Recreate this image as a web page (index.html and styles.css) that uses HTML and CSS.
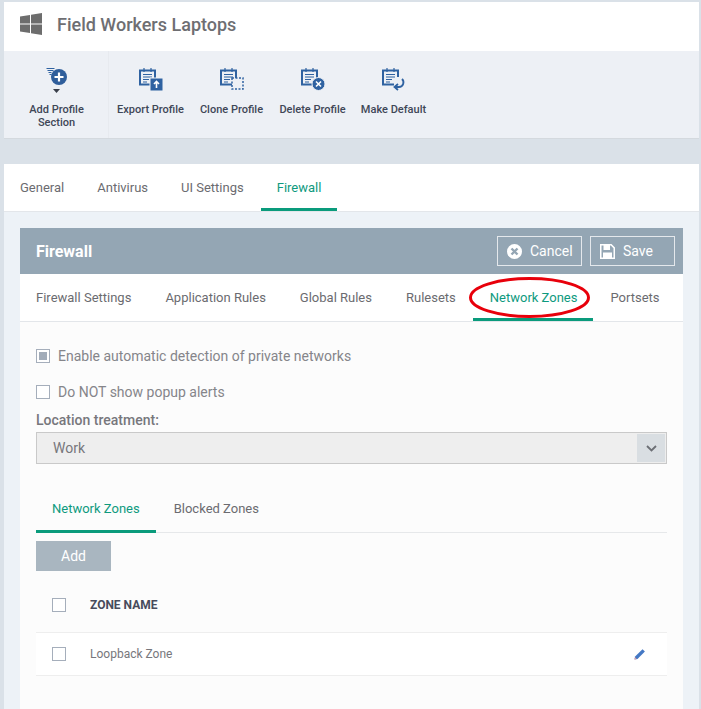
FILE: index.html
```html
<!DOCTYPE html>
<html lang="en">
<head>
<meta charset="utf-8">
<title>Field Workers Laptops</title>
<link rel="stylesheet" href="styles.css">
</head>
<body>
<div class="page">
  <header class="title-bar">
    <svg class="win-logo" width="23" height="22" viewBox="0 0 23 22"><path fill="#6d6d6d" d="M0 3.500 10 2v8.500H0zM11 1.800 22 0v10.500H11zM0 11.500h10V20L0 18.500zM11 11.500h11V22l-11-1.800z"/></svg>
    <h1 class="title">Field Workers Laptops</h1>
  </header>
  <nav class="toolbar">
    <div class="tool tool-first">
      <svg class="tool-icon" width="24" height="28" viewBox="0 0 24 28"><g fill="none" stroke="#2f62a1"><path d="M1.500 1.500h8M2.500 3.500h6M3.500 5.500h3M4.500 7.500h2"/></g><circle cx="14" cy="10" r="8" fill="#2f5e9b"/><path d="M14 5.500v9M9.500 10h9" stroke="#fff" stroke-width="2.200"/><path d="M8 22h7l-3.500 4z" fill="#3a3f4a"/></svg>
      <span class="tool-label">Add Profile Section</span>
    </div>
    <div class="tool tool-export">
      <svg class="tool-icon" width="24" height="24" viewBox="0 0 24 24"><path d="M1 3.500h15v14H1z" fill="none" stroke="#2f62a1" stroke-width="2"/><path d="M5 1v4M12 1v4M4 7.500h9M4 10h9M4 12.500h6M4 15h4" stroke="#2f62a1" stroke-width="1.200"/><path d="M11 11h13v13H11z" fill="#2f62a1" stroke="#edf0f5"/><path d="M17.500 21v-6M15 17l2.500-2.500L20 17" stroke="#fff" stroke-width="1.600" fill="none"/></svg>
      <span class="tool-label">Export Profile</span>
    </div>
    <div class="tool tool-clone">
      <svg class="tool-icon" width="24" height="24" viewBox="0 0 24 24"><path d="M1 3.500h15v14H1z" fill="none" stroke="#2f62a1" stroke-width="2"/><path d="M5 1v4M12 1v4M4 7.500h9M4 10h9M4 12.500h6M4 15h4" stroke="#2f62a1" stroke-width="1.200"/><path d="M12 11h11v11H12z" fill="#edf0f5" stroke="#2f62a1" stroke-width="1.500" stroke-dasharray="2 1.500"/></svg>
      <span class="tool-label">Clone Profile</span>
    </div>
    <div class="tool tool-delete">
      <svg class="tool-icon" width="24" height="24" viewBox="0 0 24 24"><path d="M1 3.500h15v14H1z" fill="none" stroke="#2f62a1" stroke-width="2"/><path d="M5 1v4M12 1v4M4 7.500h9M4 10h9M4 12.500h6M4 15h4" stroke="#2f62a1" stroke-width="1.200"/><circle cx="17.500" cy="17" r="6.500" fill="#2f62a1" stroke="#edf0f5"/><path d="M15 14.500l5 5M20 14.500l-5 5" stroke="#fff" stroke-width="1.600"/></svg>
      <span class="tool-label">Delete Profile</span>
    </div>
    <div class="tool tool-default">
      <svg class="tool-icon" width="24" height="24" viewBox="0 0 24 24"><path d="M16 10V3.500H1v14h11" fill="none" stroke="#2f62a1" stroke-width="2"/><path d="M5 1v4M12 1v4M4 7.500h9M4 10h9M4 12.500h6M4 15h4" stroke="#2f62a1" stroke-width="1.200"/><path d="M20 12c3 3 1 8-3 8h-4M16 17l-3.500 3 3.500 3" fill="none" stroke="#2f62a1" stroke-width="1.800"/></svg>
      <span class="tool-label">Make Default</span>
    </div>
  </nav>
  <div class="spacer"></div>
  <div class="main-tabs">
    <span class="tab tab-general">General</span>
    <span class="tab tab-antivirus">Antivirus</span>
    <span class="tab tab-ui">UI Settings</span>
    <span class="tab tab-firewall active">Firewall</span>
  </div>
  <main class="outer">
    <section class="panel">
      <div class="panel-head">
        <h2 class="panel-title">Firewall</h2>
        <div class="panel-actions">
          <button class="head-btn btn-cancel" type="button">
            <svg width="15" height="15" viewBox="0 0 15 15"><circle cx="7.500" cy="7.500" r="7.500" fill="#fff"/><path d="M4.500 4.500l6 6M10.500 4.500l-6 6" stroke="#94a6b4" stroke-width="2.400"/></svg>
            Cancel
          </button>
          <button class="head-btn btn-save" type="button">
            <svg width="15" height="15" viewBox="0 0 15 15"><path fill="#fff" fill-rule="evenodd" d="M0 0h11.500L15 3.500V15H0zM1.500 1.500v12h12V4.200L10.800 1.500zM3.500 1.500h6.500V6H3.500zM3 8.500h9v5H3z"/></svg>
            Save
          </button>
        </div>
      </div>
      <div class="sub-tabs">
        <span class="sub-tab st-settings">Firewall Settings</span>
        <span class="sub-tab st-app">Application Rules</span>
        <span class="sub-tab st-global">Global Rules</span>
        <span class="sub-tab st-rulesets">Rulesets</span>
        <span class="sub-tab st-zones active">Network Zones</span>
        <span class="sub-tab st-portsets">Portsets</span>
        <svg class="callout" width="121" height="45" viewBox="0 0 121 45"><ellipse cx="60.500" cy="22.500" rx="59" ry="19" fill="none" stroke="#e8000b" stroke-width="3"/></svg>
      </div>
      <div class="panel-body">
        <label class="check-row row-auto"><span class="box checked"></span>Enable automatic detection of private networks</label>
        <label class="check-row row-popup"><span class="box"></span>Do NOT show popup alerts</label>
        <div class="field-label">Location treatment:</div>
        <div class="select">
          <span class="select-value">Work</span>
          <span class="select-arrow"><svg width="11" height="7" viewBox="0 0 11 7"><path d="M1 1l4.500 4.500L10 1" fill="none" stroke="#6c6f75" stroke-width="1.800"/></svg></span>
        </div>
        <div class="inner-tabs">
          <span class="inner-tab active">Network Zones</span>
          <span class="inner-tab it-blocked">Blocked Zones</span>
        </div>
        <button class="add-btn" type="button">Add</button>
        <div class="zone-head">
          <span class="box"></span>
          <span class="zone-col">ZONE NAME</span>
        </div>
        <div class="zone-row">
          <span class="box"></span>
          <span class="zone-name">Loopback Zone</span>
          <svg class="edit" width="12" height="12" viewBox="0 0 12 12"><path d="M0.500 11.500l.6-3L8.500 1.200l2.400 2.400-7.400 7.300z" fill="#4478c4"/><path d="M0.500 11.500l.5-2.200 1.700 1.700z" fill="#e59aa0"/></svg>
        </div>
      </div>
    </section>
  </main>
</div>
</body>
</html>
```

FILE: styles.css
```css
* { box-sizing: border-box; }
html, body { margin: 0; height: 100%; }
body {
  background: #dae1e8;
  font-family: Roboto, "Liberation Sans", sans-serif;
  color: #6b6b70;
  overflow: hidden;
}
.page { height: 709px; margin: 0 2px 0 4px; padding-top: 2px; display: flex; flex-direction: column; }

.title-bar { height: 49px; background: #fff; display: flex; align-items: center; padding: 0 0 4px 16px; }
.win-logo { margin-right: 14px; margin-top: -1px; flex: none; }
.title { margin: 0; font-size: 18px; font-weight: 500; color: #6e6e72; line-height: 1; }

.toolbar { height: 88px; background: #edf0f5; border-bottom: 1px solid #d4d9de; display: flex; align-items: flex-start; }
.tool { display: flex; flex-direction: column; align-items: center; padding-top: 16px; width: 81px; flex: none; }
.tool-first { width: 105px; border-right: 1px solid #e7eaef; height: 87px; padding: 16px 0 0 1px; margin-right: 1px; }
.tool-icon { display: block; height: 24px; margin-bottom: 12px; flex: none; }
.tool-first .tool-icon { height: 28px; margin-bottom: 8px; }
.tool-label { font-size: 11px; font-weight: 500; color: #3f4757; line-height: 13px; text-align: center; white-space: nowrap; }
.tool-first .tool-label { white-space: normal; width: 70px; }

.spacer { height: 25px; flex: none; }

.main-tabs { height: 48px; flex: none; background: #fff; border-bottom: 1px solid #e3e6ea; display: flex; }
.tab { font-size: 13px; line-height: 47px; height: 47px; padding: 0 16.500px; color: #6b6b70; }
.tab-general { padding-left: 16px; }
.tab.active { color: #0e9a7e; border-bottom: 3px solid #0a9b7c; padding: 0 16px; margin: 0 0.500px; }

.outer { flex: 1; background: #edf2f7; padding: 16px 16px 0; }
.panel { height: 100%; background: #fcfcfc; }
.panel-head { height: 46px; background: #94a6b4; display: flex; align-items: center; justify-content: space-between; padding: 0 8px 0 16px; }
.panel-title { margin: 0; font-size: 16px; font-weight: 700; color: #fff; }
.panel-actions { display: flex; gap: 8px; }
.head-btn { height: 30px; background: transparent; border: 1px solid #e4e8ec; color: #fff; font: 400 14px Roboto, "Liberation Sans", sans-serif; display: flex; align-items: center; gap: 8px; padding: 0 9px; }
.head-btn svg { flex: none; }
.btn-cancel { width: 85px; }
.btn-save { width: 85px; }

.sub-tabs { position: relative; height: 48px; background: #fff; border-bottom: 1px solid #e3e6ea; display: flex; }
.sub-tab { font-size: 13px; line-height: 47px; height: 47px; padding: 0 17px; white-space: nowrap; color: #6b6b70; }
.st-settings { padding-left: 16px; }
.st-zones { padding-right: 16px; }
.sub-tab.active { color: #0e9a7e; border-bottom: 3px solid #0a9b7c; }
.callout { position: absolute; left: 449px; top: 1px; }

.panel-body { padding: 0 16px; }
.check-row { display: flex; align-items: center; font-size: 14px; color: #85858a; height: 20px; }
.row-auto { margin-top: 24px; }
.row-popup { margin-top: 16px; }
.box { width: 14px; height: 14px; border: 1px solid #a5aebb; background: #fff; flex: none; display: block; }
.check-row .box { margin-right: 8px; }
.box.checked { position: relative; }
.box.checked::after { content: ""; position: absolute; inset: 2px; background: #a2acb9; }
.field-label { font-size: 14px; font-weight: 500; color: #77777c; line-height: 20px; margin-top: 8px; }
.select { height: 32px; margin-top: 2px; background: #eee; border: 1px solid #c9c9c9; display: flex; justify-content: space-between; align-items: center; padding-left: 16px; font-size: 14px; color: #77777c; }
.select-arrow { width: 28px; height: 28px; margin-right: 1px; background: #d9dee2; display: flex; align-items: center; justify-content: center; }

.inner-tabs { margin-top: 24px; height: 45px; border-bottom: 1px solid #e6e8ea; display: flex; }
.inner-tab { font-size: 13px; line-height: 41px; height: 45px; padding: 0 16px; color: #6b6b70; margin-right: 2px; }
.inner-tab.active { color: #0e9a7e; border-bottom: 3px solid #0a9b7c; }

.add-btn { display: block; margin-top: 8px; width: 75px; height: 30px; background: #a9b6c0; border: 0; color: #fff; font: 400 14px Roboto, "Liberation Sans", sans-serif; }

.zone-head { height: 62px; padding: 6px 0 0 16px; border-bottom: 1px solid #eee; display: flex; align-items: center; }
.zone-col { margin-left: 24px; font-size: 12px; font-weight: 700; color: #474b5b; }
.zone-row { height: 43px; background: #fff; border-bottom: 1px solid #eee; display: flex; align-items: center; padding-left: 16px; }
.zone-name { margin-left: 24px; font-size: 12px; color: #77777c; }
.edit { margin-left: auto; margin-right: 21px; }
```
